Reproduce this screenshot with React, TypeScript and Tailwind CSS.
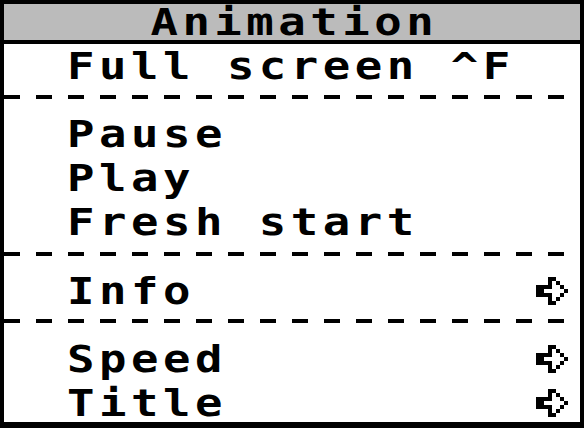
import React from 'react';

// Hollow pixel arrow used for submenu entries
const SubArrow: React.FC = () => {
    const cells: [number, number, number][] = [
        // [row, colStart, colEnd]
        [0, 3, 4],
        [1, 3, 3], [1, 5, 5],
        [2, 0, 3], [2, 6, 6],
        [3, 0, 1], [3, 7, 7],
        [4, 0, 3], [4, 6, 6],
        [5, 3, 3], [5, 5, 5],
        [6, 3, 4],
    ];
    return (
        <svg width="32" height="28" viewBox="0 0 32 28" shapeRendering="crispEdges" className="flex-none">
            {cells.map(([r, a, b], i) => (
                <rect key={i} x={a * 4} y={r * 4} width={(b - a + 1) * 4} height={4} fill="#000" />
            ))}
        </svg>
    );
};

const Dashes: React.FC<{ className?: string }> = ({ className = '' }) => (
    <div className={`h-[4px] w-full flex-none bg-[repeating-linear-gradient(to_right,#000_0px,#000_16px,transparent_16px,transparent_32px)] ${className}`} />
);

const Item: React.FC<{ label: string; sub?: boolean }> = ({ label, sub }) => (
    <div className="flex items-center justify-between h-[44px] flex-none pl-[63px] pr-[12px]">
        <span className="whitespace-pre leading-[44px] scale-x-[1.2] origin-left">{label}</span>
        {sub && <SubArrow />}
    </div>
);

export default function App() {
    return (
        <div className="w-[584px] h-[428px] box-border border-4 border-b-[6px] border-black bg-white overflow-hidden flex flex-col text-black font-['DejaVu_Sans_Mono',monospace] font-bold text-[38px] tracking-[3.77px]">
            {/* Title bar */}
            <div className="h-[40px] flex-none bg-[#bbbbbb] border-b-4 border-black flex items-center justify-center">
                <span className="leading-[36px] pl-[4px] scale-x-[1.2] origin-center">Animation</span>
            </div>

            <Item label="Full screen ^F" />
            <Dashes className="mt-[7px]" />

            <div className="mt-[13px] flex flex-col">
                <Item label="Pause" />
                <Item label="Play" />
                <Item label="Fresh start" />
            </div>
            <Dashes className="mt-[8px]" />

            <div className="mt-[13px] flex flex-col">
                <Item label="Info" sub />
            </div>
            <Dashes className="mt-[6px]" />

            <div className="mt-[14px] flex flex-col">
                <Item label="Speed" sub />
                <Item label="Title" sub />
            </div>
        </div>
    );
}
